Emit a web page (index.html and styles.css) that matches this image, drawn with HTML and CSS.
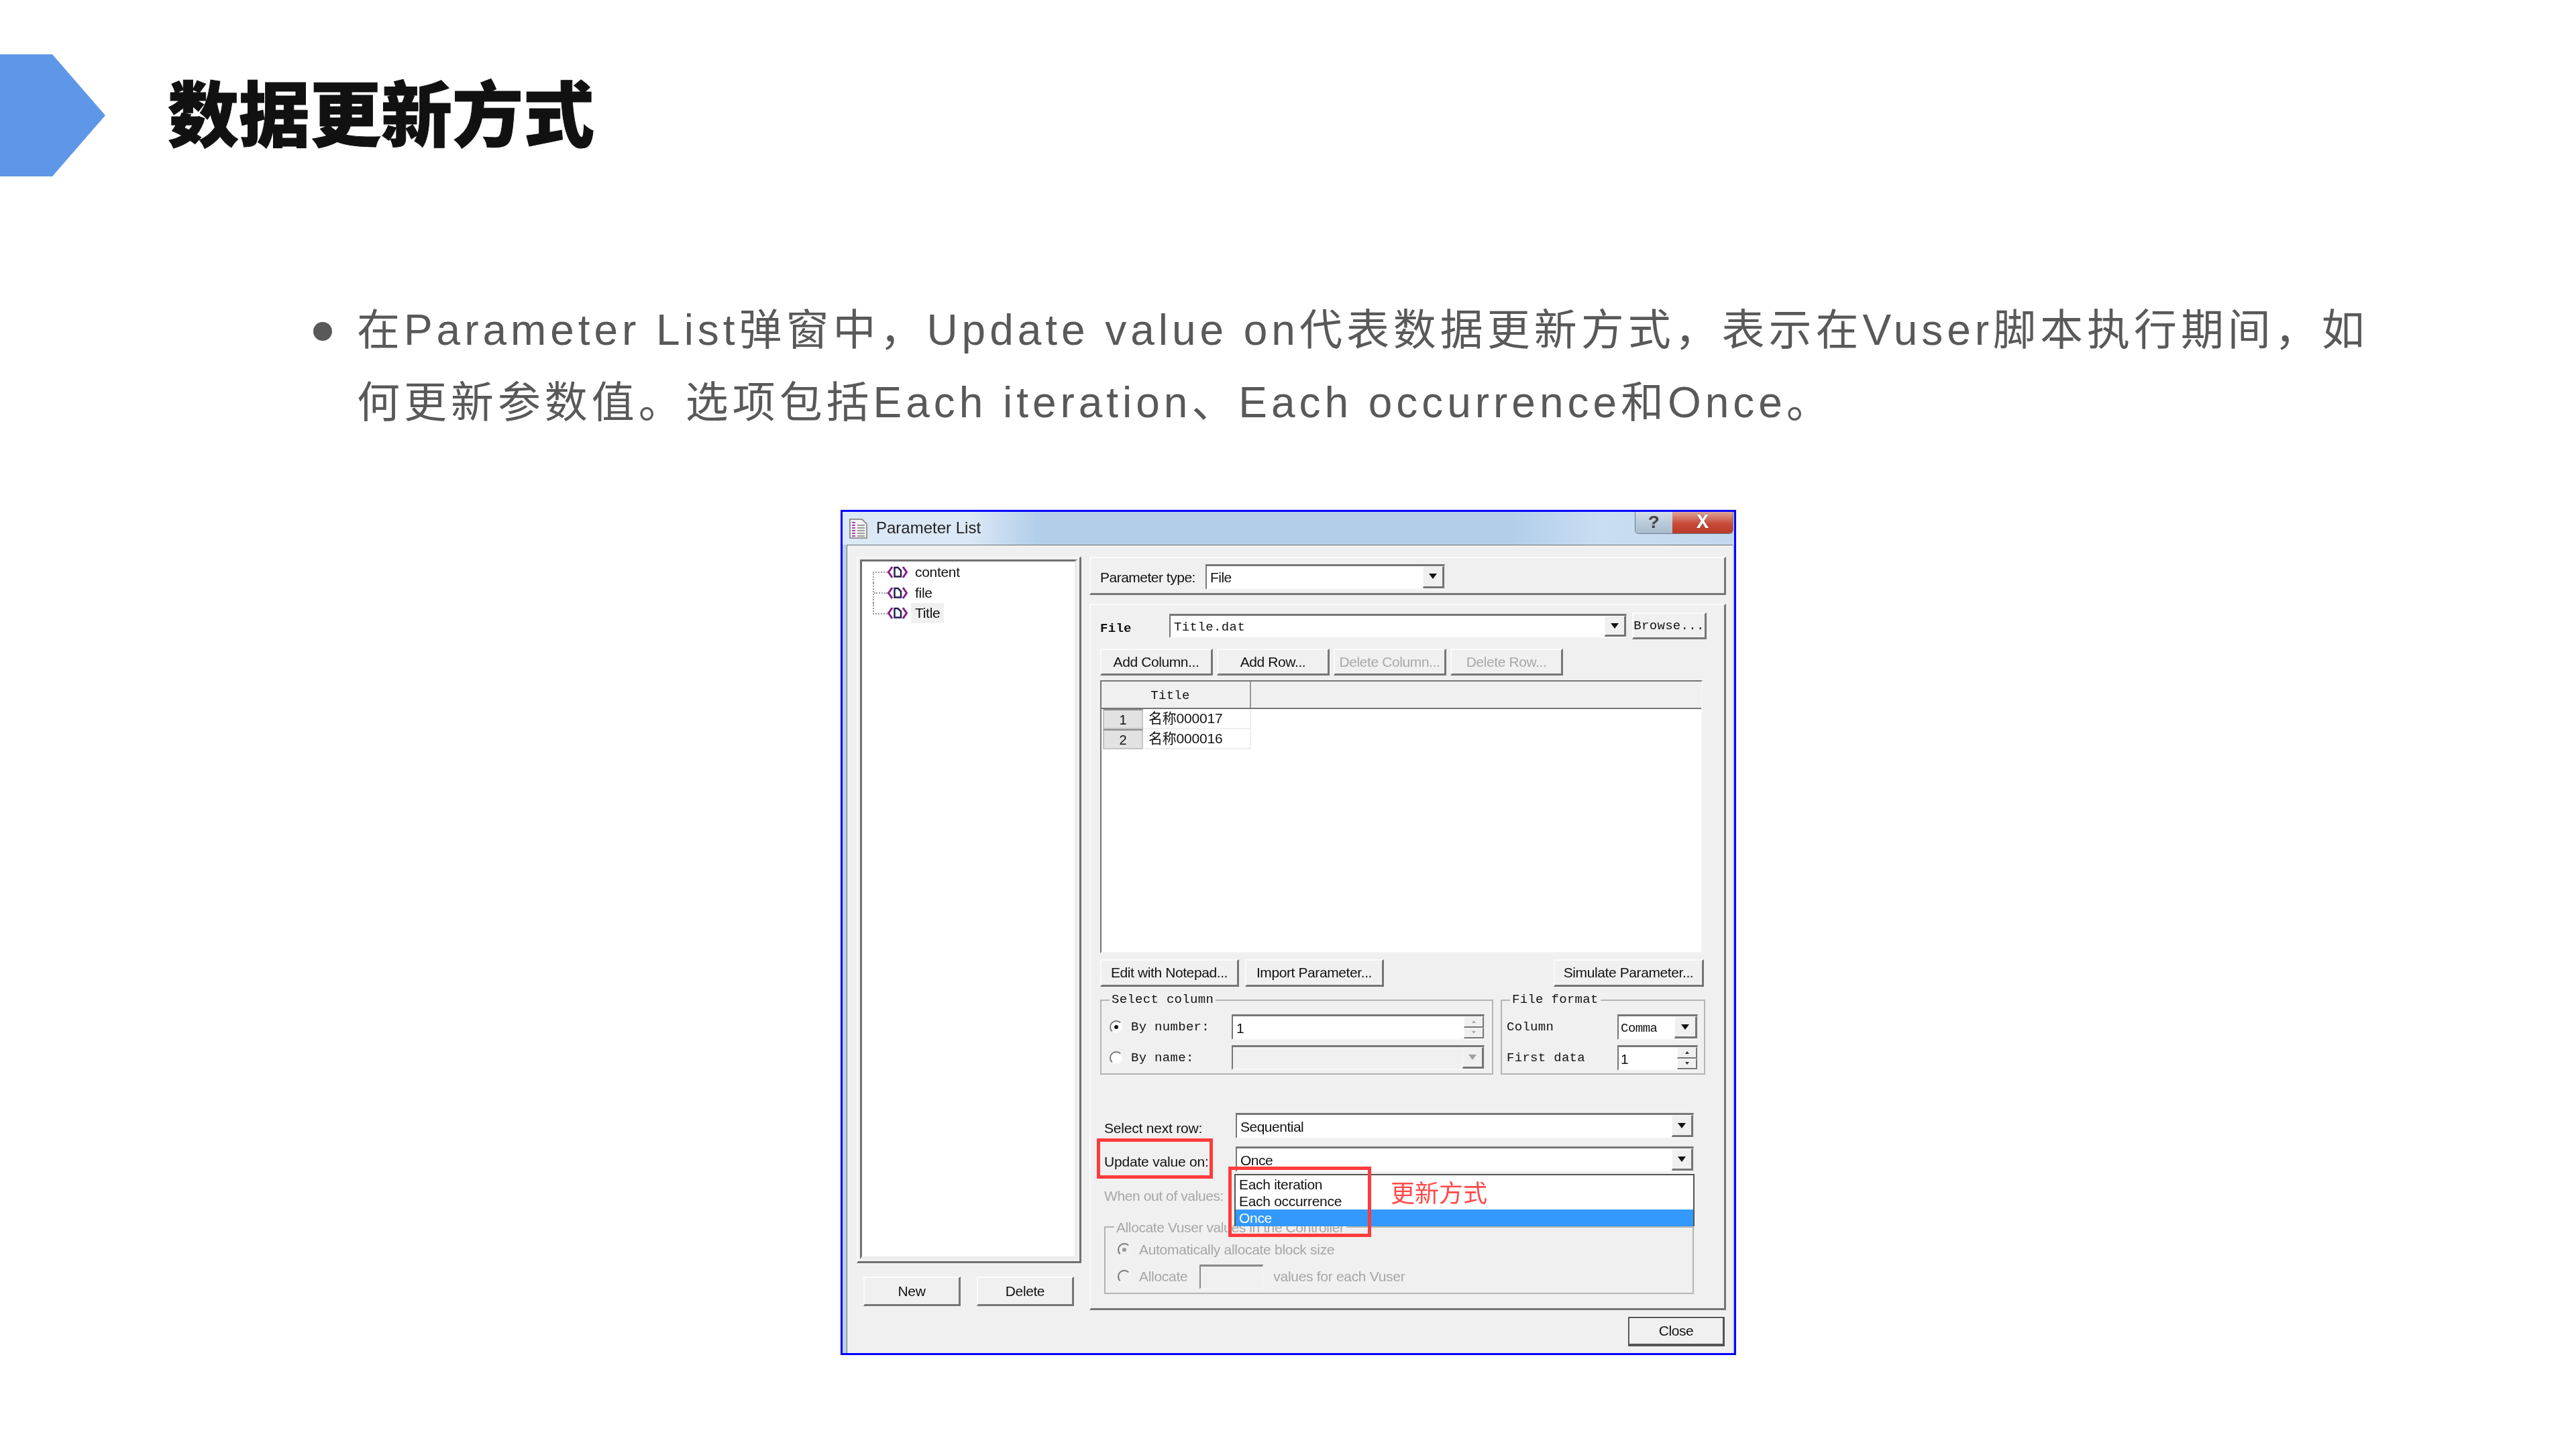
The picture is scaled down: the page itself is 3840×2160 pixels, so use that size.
FILE: index.html
```html
<!DOCTYPE html>
<html lang="zh-CN">
<head>
  <meta charset="UTF-8" />
  <title>数据更新方式</title>
  <link rel="stylesheet" href="styles.css">
</head>
<body>

<header class="slide-head">
  <div class="chevron"></div>
  <h1>数据更新方式</h1>
</header>

<div class="bullet">
  <span class="dot"></span>
  <p>在Parameter List弹窗中，Update value on代表数据更新方式，表示在Vuser脚本执行期间，如何更新参数值。选项包括Each iteration、Each occurrence和Once。</p>
</div>

<div class="dialog">
  <div class="titlebar">
    <svg class="doc-icon" viewBox="0 0 27 30">
      <path d="M1 1h18l7 7v21H1z" fill="#f4f4f4" stroke="#777" stroke-width="1.5"/>
      <path d="M4 6h5M4 10h5M4 14h5M4 18h5M4 22h5M4 26h5" stroke="#b040b0" stroke-width="2"/>
      <path d="M12 10h11M12 14h11M12 18h11M12 22h11M12 26h11" stroke="#999" stroke-width="2"/>
    </svg>
    <span class="titlebar-text">Parameter List</span>
    <div class="caption">
      <span class="cap-help">?</span>
      <span class="cap-close">X</span>
    </div>
  </div>

  <div class="client">
    <div class="main">
      <div class="left-col">
        <div class="tree-box">
          <div class="tree">
            <div class="tree-row"><svg class="var-icon" viewBox="0 0 30 22"><use href="#var"/></svg><span class="tree-label">content</span></div>
            <div class="tree-row"><svg class="var-icon" viewBox="0 0 30 22"><use href="#var"/></svg><span class="tree-label">file</span></div>
            <div class="tree-row"><svg class="var-icon" viewBox="0 0 30 22"><use href="#var"/></svg><span class="tree-label selected">Title</span></div>
          </div>
        </div>
        <div class="left-buttons">
          <button class="btn btn-left">New</button>
          <button class="btn btn-left">Delete</button>
        </div>
      </div>

      <div class="right-col">
        <div class="panel panel-type">
          <span class="ui-label type-label">Parameter type:</span>
          <div class="combo combo-type"><span class="combo-text">File</span><span class="arrow"></span></div>
        </div>

        <div class="panel panel-file">
          <div class="file-row">
            <span class="mono-label file-label">File</span>
            <div class="combo combo-file"><span class="combo-text mono">Title.dat</span><span class="arrow"></span></div>
            <button class="btn btn-browse mono">Browse...</button>
          </div>

          <div class="btn-row">
            <button class="btn btn-wide">Add Column...</button>
            <button class="btn btn-wide">Add Row...</button>
            <button class="btn btn-wide off">Delete Column...</button>
            <button class="btn btn-wide off">Delete Row...</button>
          </div>

          <div class="grid">
            <div class="grid-head"><span class="grid-title mono">Title</span></div>
            <div class="grid-row"><span class="row-num">1</span><span class="cell">名称000017</span></div>
            <div class="grid-row"><span class="row-num">2</span><span class="cell">名称000016</span></div>
          </div>

          <div class="btn-row-2">
            <div class="btn-group">
              <button class="btn btn-edit">Edit with Notepad...</button>
              <button class="btn btn-edit">Import Parameter...</button>
            </div>
            <button class="btn btn-sim">Simulate Parameter...</button>
          </div>

          <div class="groups">
            <div class="group group-col">
              <div class="group-title mono">Select column</div>
              <div class="col-grid">
                <span class="radio on"></span><span class="mono">By number:</span>
                <div class="combo combo-num"><span class="combo-text">1</span><span class="spin light"><i class="up"></i><i class="down"></i></span></div>
                <span class="radio"></span><span class="mono">By name:</span>
                <div class="combo combo-num blank"><span class="combo-text"></span><span class="arrow grey"></span></div>
              </div>
            </div>
            <div class="group group-fmt">
              <div class="group-title mono">File format</div>
              <div class="fmt-grid">
                <span class="mono">Column</span>
                <div class="combo combo-fmt"><span class="combo-text mono">Comma</span><span class="arrow"></span></div>
                <span class="mono">First data</span>
                <div class="combo combo-fmt"><span class="combo-text">1</span><span class="spin"><i class="up"></i><i class="down"></i></span></div>
              </div>
            </div>
          </div>

          <div class="form-row form-first">
            <span class="ui-label form-label">Select next row:</span>
            <div class="combo combo-form"><span class="combo-text">Sequential</span><span class="arrow"></span></div>
          </div>
          <div class="form-row form-second">
            <span class="ui-label form-label">Update value on:</span>
            <div class="combo combo-form"><span class="combo-text">Once</span><span class="arrow"></span></div>
          </div>
          <div class="out-row">When out of values:</div>

          <div class="group group-alloc">
            <div class="group-title alloc-title">Allocate Vuser values in the Controller</div>
            <div class="alloc-row alloc-first"><span class="radio on dim"></span><span>Automatically allocate block size</span></div>
            <div class="alloc-row alloc-second"><span class="radio dim"></span><span>Allocate</span><span class="alloc-input"></span><span>values for each Vuser</span></div>
          </div>

          <!-- open dropdown and the red marks sit on top of the form -->
          <div class="dropdown">
            <div class="drop-item">Each iteration</div>
            <div class="drop-item">Each occurrence</div>
            <div class="drop-item active">Once</div>
          </div>
          <div class="mark mark-label"></div>
          <div class="mark mark-list"></div>
          <div class="mark-note">更新方式</div>
        </div>
      </div>
    </div>

    <div class="close-row">
      <button class="btn btn-close">Close</button>
    </div>
  </div>
</div>

<svg class="defs" width="0" height="0">
  <symbol id="var" viewBox="0 0 30 22">
    <path d="M7 3L1.5 11L7 19M23 3L28.5 11L23 19" fill="none" stroke="#8a1a8a" stroke-width="3"/>
    <path d="M10.5 4h5l4.500 4.500v9h-9.500z" fill="none" stroke="#222250" stroke-width="2.500"/>
  </symbol>
</svg>

</body>
</html>
```

FILE: styles.css
```css
html, body {
  margin: 0;
  background: #fff;
}
body {
  width: 3840px;
  height: 2160px;
  overflow: hidden;
  font-family: "Liberation Sans", "Noto Sans CJK SC", sans-serif;
}
.defs {
  display: block;
}

/* slide header */
.slide-head {
  display: flex;
  align-items: center;
  padding-top: 81px;
  height: 182px;
}
.chevron {
  width: 157px;
  height: 182px;
  background: #5f97e8;
  clip-path: polygon(0 0, 78px 0, 100% 50%, 78px 100%, 0 100%);
}
.slide-head h1 {
  margin: 0 0 16px 93px;
  font-family: "Noto Sans CJK SC", sans-serif;
  font-size: 106px;
  font-weight: 900;
  line-height: 1;
  color: #111;
  -webkit-text-stroke: 1px #111;
}

/* bullet text */
.bullet {
  display: flex;
  margin: 175px 0 0 467px;
  width: 3085px;
}
.dot {
  flex: none;
  width: 28px;
  height: 28px;
  margin: 42px 37px 0 0;
  border-radius: 50%;
  background: #595959;
}
.bullet p {
  margin: 0;
  font-size: 64px;
  line-height: 108px;
  letter-spacing: 5.96px;
  color: #595959;
}

/* dialog */
.dialog {
  box-sizing: border-box;
  display: flex;
  flex-direction: column;
  width: 1335px;
  height: 1260px;
  margin: 106px 0 0 1253px;
  border: 3px solid #0000ff;
  background: #b9d1ea;
  font-size: 21px;
  color: #111;
  filter: blur(0.6px);
}
.titlebar {
  display: flex;
  align-items: center;
  flex: none;
  height: 49px;
  padding-left: 10px;
  background: linear-gradient(90deg, #dbe8f5 0, #dbe8f5 190px, #b2cfea 290px, #b2cfea 1000px, #c9def2 1130px, #c2d8ee 100%);
}
.doc-icon {
  width: 27px;
  height: 30px;
}
.titlebar-text {
  margin: 0 0 2px 13px;
  font-size: 24px;
  color: #222;
}
.caption {
  display: flex;
  align-self: flex-start;
  margin-left: auto;
  margin-right: 1px;
  height: 32px;
  border: 1px solid #6b7a8a;
  border-top: 0;
  border-radius: 0 0 6px 6px;
  overflow: hidden;
}
.caption span {
  display: flex;
  align-items: center;
  justify-content: center;
  font-family: "Liberation Mono", monospace;
  font-weight: bold;
}
.cap-help {
  width: 55px;
  font-size: 28px;
  color: #444;
  background: linear-gradient(#d2dde8, #b8c9d9 55%, #a8bccd);
}
.cap-close {
  width: 90px;
  font-size: 30px;
  color: #fff;
  text-shadow: 0 0 2px #555;
  background: linear-gradient(#dca59c, #c94a38 55%, #b83a2a);
}
.client {
  flex: 1;
  box-sizing: border-box;
  margin: 0 2px 0 6px;
  padding: 17px 0 0 14px;
  border-top: 1px solid #707070;
  border-left: 1px solid #707070;
  background: #f0f0f0;
}
.main {
  display: flex;
  gap: 12px;
}
.left-col {
  width: 335px;
}
.right-col {
  width: 949px;
}

/* tree */
.tree-box {
  box-sizing: border-box;
  height: 1053px;
  padding: 3px;
  border-top: 1px solid #fafafa;
  border-left: 2px solid #fafafa;
  border-right: 3px solid #707070;
  border-bottom: 3px solid #707070;
}
.tree {
  box-sizing: border-box;
  height: 100%;
  padding: 1px 0 0 16px;
  background: #fff;
  border-top: 3px solid #707070;
  border-left: 3px solid #707070;
  border-right: 4px solid #ececec;
  border-bottom: 4px solid #ececec;
}
.tree-row {
  display: flex;
  align-items: center;
  height: 30.5px;
  border-left: 2px dotted #9a9a9a;
}
.tree-row::before {
  content: "";
  width: 20px;
  border-top: 2px dotted #9a9a9a;
}
.tree-row:first-child,
.tree-row:last-child {
  border-left: 0;
}
.tree-row:first-child::before {
  align-self: flex-end;
  height: 15px;
  border-left: 2px dotted #9a9a9a;
}
.tree-row:last-child::before {
  align-self: flex-start;
  height: 15px;
  border-top: 0;
  border-left: 2px dotted #9a9a9a;
  border-bottom: 2px dotted #9a9a9a;
}
.var-icon {
  width: 30px;
  height: 22px;
}
.tree-label {
  margin-left: 5px;
  padding: 0 6px;
  height: 30px;
  line-height: 30px;
  letter-spacing: -0.3px;
}
.tree-label.selected {
  background: #f0f0f0;
}

/* shared controls */
.mono, .mono-label {
  font-family: "Liberation Mono", "Noto Sans CJK SC", monospace;
  font-size: 19px;
  letter-spacing: 0.3px;
}
.mono-label {
  font-weight: bold;
}
.ui-label {
  letter-spacing: -0.5px;
}
.btn {
  box-sizing: border-box;
  padding: 0;
  background: #f0f0f0;
  border-style: solid;
  border-width: 2px 3px 3px 2px;
  border-color: #fbfbfb #767676 #767676 #fbfbfb;
  font-family: "Liberation Sans", sans-serif;
  font-size: 21px;
  letter-spacing: -0.4px;
  color: #111;
}
.btn.mono {
  font-family: "Liberation Mono", monospace;
  font-size: 19px;
  letter-spacing: 0.3px;
}
.btn.off {
  color: #a8a8a8;
}
.combo {
  box-sizing: border-box;
  display: flex;
  align-items: center;
  background: #fff;
  border-style: solid;
  border-width: 3px 1px 2px 2px;
  border-color: #777 #e8e8e8 #f8f8f8 #777;
}
.combo-text {
  flex: 1;
  padding: 2px 0 0 5px;
  letter-spacing: -0.5px;
}
.arrow {
  box-sizing: border-box;
  display: flex;
  align-items: center;
  justify-content: center;
  flex: none;
  align-self: stretch;
  width: 32px;
  background: #f0f0f0;
  border-style: solid;
  border-width: 1px 3px 3px 1px;
  border-color: #fbfbfb #767676 #767676 #fbfbfb;
}
.arrow::before {
  content: "";
  border-style: solid;
  border-width: 8px 6.500px 0;
  border-color: #111 transparent transparent;
}
.arrow.grey::before {
  border-top-color: #a0a0a0;
}
.spin {
  display: flex;
  flex-direction: column;
  flex: none;
  align-self: stretch;
  width: 30px;
}
.spin i {
  flex: 1;
  display: flex;
  align-items: center;
  justify-content: center;
  background: #f0f0f0;
  border-style: solid;
  border-width: 1px 2px 2px 1px;
  border-color: #fbfbfb #767676 #767676 #fbfbfb;
}
.spin i::before {
  content: "";
  border-style: solid;
  border-color: transparent;
}
.spin .up::before {
  border-width: 0 3px 4px;
  border-bottom-color: #333;
}
.spin .down::before {
  border-width: 4px 3px 0;
  border-top-color: #333;
}
.spin.light .up::before {
  border-bottom-color: #aaa;
}
.spin.light .down::before {
  border-top-color: #aaa;
}
.radio {
  box-sizing: border-box;
  display: flex;
  align-items: center;
  justify-content: center;
  width: 20px;
  height: 20px;
  border-radius: 50%;
  background: #fff;
  border: 2px solid;
  border-color: #777 #f4f4f4 #f4f4f4 #777;
}
.radio.on::before {
  content: "";
  width: 6px;
  height: 6px;
  border-radius: 50%;
  background: #111;
}
.radio.dim {
  background: #f0f0f0;
}
.radio.dim::before {
  background: #999;
}

/* panels on the right */
.panel {
  box-sizing: border-box;
  position: relative;
  border-style: solid;
  border-width: 2px 3px 3px 2px;
  border-color: #fbfbfb #767676 #767676 #fbfbfb;
}
.panel-type {
  display: flex;
  align-items: center;
  height: 57px;
  padding: 3px 0 0 14px;
}
.type-label {
  padding-top: 3px;
}
.combo-type {
  width: 357px;
  height: 38px;
  margin-left: 15px;
}
.panel-file {
  height: 1053px;
  margin-top: 13px;
  padding: 11px 0 0 14px;
}
.file-row {
  display: flex;
  align-items: center;
  height: 40px;
}
.file-label {
  width: 103px;
  padding-top: 8px;
}
.combo-file {
  width: 682px;
  height: 36px;
}
.combo-file .combo-text {
  letter-spacing: 0.4px;
}
.btn-browse {
  width: 111px;
  height: 40px;
  margin-left: 8px;
}
.btn-row {
  display: flex;
  gap: 6px;
  margin-top: 14px;
}
.btn-wide {
  width: 168px;
  height: 40px;
}

/* data grid */
.grid {
  box-sizing: border-box;
  width: 898px;
  height: 407px;
  margin-top: 7px;
  background: #fff;
  border-style: solid;
  border-width: 2px;
  border-color: #777 #f4f4f4 #f4f4f4 #777;
}
.grid-head {
  height: 39px;
  background: #f0f0f0;
  border-bottom: 2px solid #777;
}
.grid-title {
  display: flex;
  align-items: center;
  justify-content: center;
  box-sizing: border-box;
  width: 223px;
  height: 39px;
  padding: 3px 16px 0 0;
  border-right: 2px solid #999;
}
.grid-row {
  display: flex;
  height: 30px;
  padding-left: 2px;
}
.row-num {
  box-sizing: border-box;
  width: 60px;
  text-align: center;
  line-height: 28px;
  font-size: 20px;
  background: #e2e2e2;
  border: 2px solid #c4c4c4;
  border-top-color: #8c8c8c;
}
.cell {
  box-sizing: border-box;
  width: 161px;
  padding-left: 8px;
  line-height: 28px;
  font-size: 21px;
  letter-spacing: -0.2px;
  border-bottom: 2px solid #efefef;
  border-right: 2px solid #efefef;
}
.btn-row-2 {
  display: flex;
  justify-content: space-between;
  width: 900px;
  margin-top: 9px;
}
.btn-group {
  display: flex;
  gap: 9px;
}
.btn-edit {
  width: 207px;
  height: 41px;
}
.btn-sim {
  width: 224px;
  height: 41px;
}

/* group boxes */
.groups {
  display: flex;
  gap: 11px;
  margin-top: 19px;
}
.group {
  box-sizing: border-box;
  height: 112px;
  border: 2px solid #b4b4b4;
}
.group-col {
  width: 586px;
}
.group-fmt {
  width: 305px;
}
.group-title {
  width: fit-content;
  height: 24px;
  line-height: 24px;
  margin: -14px 0 0 12px;
  padding: 0 3px;
  background: #f0f0f0;
}
.col-grid {
  display: grid;
  grid-template-columns: 22px 140px 377px;
  grid-template-rows: 38px 37px;
  gap: 8px 10px;
  align-items: center;
  margin: 10px 0 0 12px;
}
.combo-num {
  width: 377px;
  height: 100%;
}
.combo-num.blank {
  background: #f0f0f0;
}
.fmt-grid {
  display: grid;
  grid-template-columns: 165px 120px;
  grid-template-rows: 38px 38px;
  gap: 8px 0;
  align-items: center;
  margin: 10px 0 0 7px;
}
.combo-fmt {
  height: 100%;
}
.combo-fmt .arrow {
  width: 34px;
}
.combo-fmt .combo-text {
  padding-left: 3px;
}

/* update options */
.form-row {
  display: flex;
  align-items: center;
  height: 38px;
  padding-left: 6px;
}
.form-first {
  margin-top: 57px;
}
.form-second {
  margin-top: 12px;
}
.form-label {
  width: 196px;
  padding-top: 8px;
  letter-spacing: -0.2px;
}
.combo-form {
  width: 683px;
}
.form-row .combo-form {
  height: 38px;
}
.out-row {
  height: 24px;
  margin: 24px 0 0 6px;
  line-height: 24px;
  letter-spacing: -0.4px;
  color: #a6a6a6;
}
.group-alloc {
  width: 879px;
  height: 101px;
  margin: 33px 0 0 6px;
  color: #a6a6a6;
}
.alloc-title {
  letter-spacing: -0.4px;
  margin: -12px 0 0 13px;
}
.alloc-row {
  display: flex;
  align-items: center;
  padding-left: 18px;
  letter-spacing: -0.3px;
}
.alloc-row .radio {
  margin-right: 12px;
}
.alloc-first {
  height: 30px;
  margin-top: 6px;
}
.alloc-second {
  height: 36px;
  margin-top: 7px;
}
.alloc-input {
  box-sizing: border-box;
  width: 95px;
  height: 36px;
  margin: 0 15px 0 18px;
  border-style: solid;
  border-width: 3px 1px 1px 2px;
  border-color: #888 #f8f8f8 #f8f8f8 #888;
}

/* overlays */
.dropdown {
  box-sizing: border-box;
  position: absolute;
  left: 214px;
  top: 848px;
  width: 686px;
  height: 78px;
  padding-top: 1px;
  background: #fff;
  border: 2px solid #555;
  border-bottom-width: 3px;
}
.drop-item {
  height: 25px;
  padding-left: 5px;
  line-height: 25px;
  letter-spacing: -0.3px;
}
.drop-item.active {
  background: #3399ff;
  color: #fff;
}
.mark {
  box-sizing: border-box;
  position: absolute;
  border: 5px solid #ff3b3b;
}
.mark-label {
  left: 9px;
  top: 795px;
  width: 173px;
  height: 60px;
}
.mark-list {
  left: 205px;
  top: 837px;
  width: 213px;
  height: 105px;
}
.mark-note {
  position: absolute;
  left: 447px;
  top: 854px;
  font-family: "Noto Sans CJK SC", sans-serif;
  font-size: 36px;
  line-height: 40px;
  color: #ff4a4a;
}
.close-row {
  display: flex;
  justify-content: flex-end;
  width: 1294px;
  margin-top: 10px;
}
.btn-close {
  width: 144px;
  height: 44px;
  border: 2px solid #555;
  border-right-width: 3px;
  border-bottom-width: 4px;
  box-shadow: inset 1px 1px 0 #fff;
}
.left-buttons {
  display: flex;
  gap: 24px;
  margin: 20px 0 0 10px;
}
.btn-left {
  width: 145px;
  height: 44px;
}
```
